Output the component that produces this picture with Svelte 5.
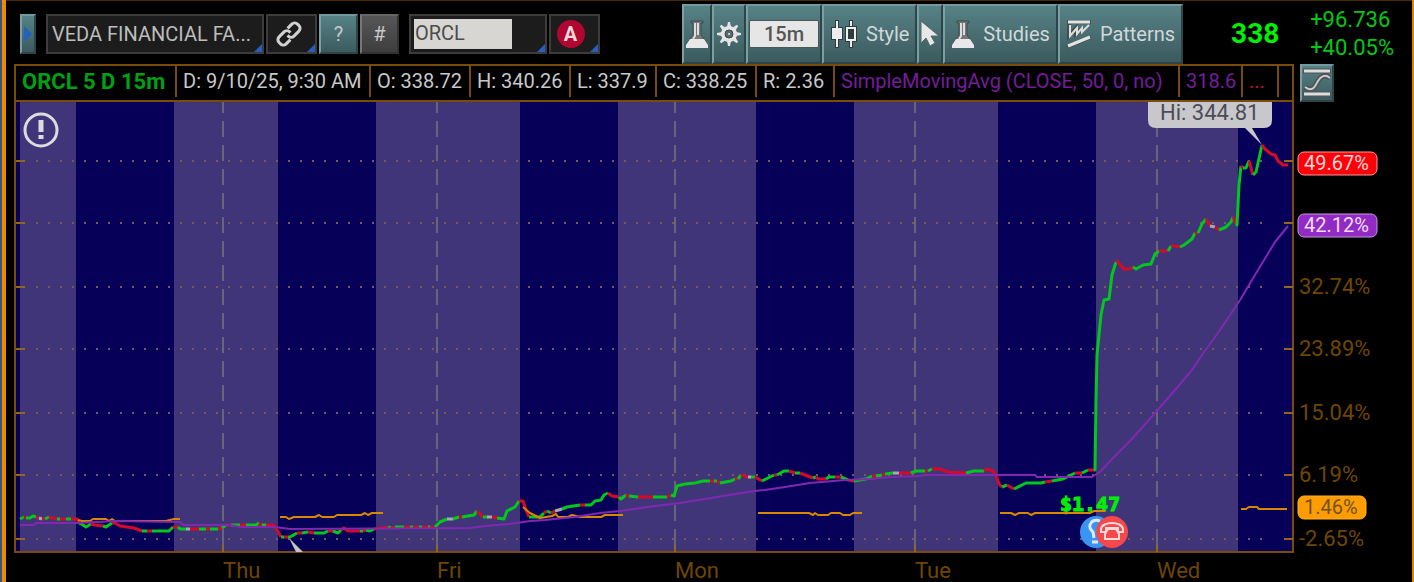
<script>
    let symbol = "ORCL";

    const cells = [
        { text: "ORCL 5 D 15m", kind: "name" },
        { text: "D: 9/10/25, 9:30 AM" },
        { text: "O: 338.72" },
        { text: "H: 340.26" },
        { text: "L: 337.9" },
        { text: "C: 338.25" },
        { text: "R: 2.36" },
        { text: "SimpleMovingAvg (CLOSE, 50, 0, no)", kind: "study" },
        { text: "318.6", kind: "study" },
        { text: "...", kind: "more" },
        { text: "" }
    ];

    // extended hours are shaded lighter
    const sessions = [[20, 76], [174, 278], [376, 520], [618, 756], [854, 998], [1096, 1238]];

    const days = [
        { x: 223, label: "Thu" },
        { x: 437, label: "Fri" },
        { x: 675, label: "Mon" },
        { x: 915, label: "Tue" },
        { x: 1157, label: "Wed" }
    ];

    const levels = [
        { y: 161 },
        { y: 223 },
        { y: 287, label: "32.74%" },
        { y: 349, label: "23.89%" },
        { y: 413, label: "15.04%" },
        { y: 475, label: "6.19%" },
        { y: 539, label: "-2.65%" }
    ];

    const badges = [
        { y: 152, width: 79, text: "49.67%", fill: "#ff0008", stroke: "#ff9a9a", color: "#ffd8d8" },
        { y: 214, width: 79, text: "42.12%", fill: "#922bc4", stroke: "#c795e0", color: "#eedcf8" },
        { y: 496, width: 68, text: "1.46%", fill: "#ff9c00", stroke: "#ffae30", color: "#6f5220" }
    ];

    // u = up, d = down, n = unchanged; each run goes on from the last point
    const price = `
        20,519 u 24,517 d 26,518 u 30,518 33,516 36,517 d 39,518 n 42,519 d 45,519 u 49,517 d 57,519 u 60,519
        d 66,519 u 71,519 d 77,519 79,523 u 83,525 86,527 91,524 d 95,525 103,526 u 106,527 112,523 d 115,523
        120,526 127,527 134,528 142,531 u 147,531 d 152,531 u 169,531 173,527 d 178,527 u 180,529 186,529
        n 190,529 d 199,529 u 206,529 d 210,529 u 218,529 d 222,528 u 226,525 d 231,525 u 240,525 d 246,525
        u 256,525 259,523 d 262,525 u 266,525 d 274,525 276,528 281,537 u 284,537 d 288,537 u 290,537 297,533
        d 302,533 u 308,532 d 314,533 u 324,533 328,531 d 333,531 u 338,533 341,530 d 344,528 348,531 360,531
        u 363,531 d 366,530 u 370,531 374,529 d 388,527 u 391,528 d 395,527 u 404,527 d 410,527 u 413,527
        d 419,527 u 422,527 d 428,527 u 430,527 d 435,527 u 440,522 447,519 n 453,519 u 459,517 d 462,517
        u 474,515 477,511 d 483,517 u 487,517 n 492,517 d 497,518 u 504,519 507,511 515,507 519,501
        d 523,501 526,510 529,517 u 534,517 540,517 544,513 d 547,511 u 551,513 d 555,511 n 562,509
        u 567,507 580,505 d 585,505 u 591,505 595,501 601,500 604,495 608,493 d 612,496 619,497
        u 621,499 626,495 d 629,496 u 638,497 d 653,497 u 658,497 667,497 d 671,495 u 674,496 677,486 685,484
        695,483 703,481 710,481 d 714,481 u 717,481 d 720,483 u 731,481 735,479 d 738,479 u 741,475 d 748,477
        n 751,477 u 755,477 d 762,481 u 768,478 774,475 d 777,475 u 784,471 789,471 d 795,473 u 800,473
        d 805,475 813,478 u 816,477 d 818,479 826,479 u 829,477 835,477 d 841,477 u 848,480 d 854,481
        u 866,479 872,476 d 876,476 u 882,475 d 885,474 u 893,473 n 899,473 d 911,473 u 916,471 925,471
        d 928,471 u 932,469 d 940,469 948,472 966,473 u 974,471 984,471 d 987,469 993,471 996,475 999,484
        1002,487 u 1007,485 d 1014,489 u 1026,483 1041,483 1045,482 d 1052,481 u 1063,479 1075,473 d 1082,473
        u 1088,470 d 1094,470 u 1095,470 1096,400 1097,355 1099,335 1101,315 1104,300 1109,299 1112,275
        1116,262 d 1117,261 1124,269 1129,269 1133,267 u 1136,269 1143,265 1151,264 1155,254 1159,251
        d 1168,251 u 1171,246 d 1174,246 1180,247 u 1184,245 1192,239 1195,233 d 1198,233 u 1202,224
        1206,219 d 1210,226 n 1215,227 d 1219,230 u 1226,227 1231,222 1233,217 d 1236,224 u 1237,225
        1239,185 1241,166 d 1243,168 u 1246,168 1249,161 d 1253,175 u 1256,172 1262,145 d 1265,149
        1271,154 1275,155 1278,161 1283,165 1288,165`;

    const average = "20,525 34,525 36,523 78,523 115,521 180,522 183,525 230,525 240,527 275,527 290,529 "
        + "470,528 485,526 510,524 530,521 545,520 575,517 600,513 620,511 655,506 680,503 705,499 735,494 "
        + "755,491 765,490 785,487 810,483 845,480 870,479 890,477 920,476 925,475 1035,475 1037,477 "
        + "1092,477 1100,472 1112,459 1130,441 1156,412 1175,390 1192,370 1204,352 1218,333 1226,321 "
        + "1240,300 1258,270 1275,242 1288,226";

    const compare = [
        "78,520 82,521 90,521 93,519 106,519 109,521 112,519 115,521 166,521 174,519 180,519",
        "280,517 286,517 289,519 294,517 315,517 319,515 322,517 334,517 337,515 361,515 365,513 368,515 372,513 383,513",
        "523,507 530,513 540,518 552,516 556,514 558,517 568,517 572,515 580,517 601,517 605,515 623,515",
        "758,513 809,513 813,515 815,513 818,515 828,515 831,513 840,513 843,515 850,515 853,513 862,513",
        "1000,513 1011,513 1015,515 1019,513 1028,513 1031,515 1035,513 1090,513 1094,511 1105,511",
        "1241,509 1246,509 1249,507 1257,507 1259,509 1287,509"
    ];

    function toRuns(source) {
        const runs = [];
        let last = "";
        for (const token of source.trim().split(/\s+/)) {
            if (token.length === 1) {
                runs.push({ kind: token, points: last });
            } else {
                if (runs.length) runs[runs.length - 1].points += " " + token;
                last = token;
            }
        }
        return runs;
    }

    const runs = toRuns(price);
</script>

{#snippet flask()}
    <svg class="icon" width="24" height="30" viewBox="0 0 24 30" aria-hidden="true">
        <path d="M6 2h12v2h-2v12l6 8v4H2v-4l6-8V4H6z" fill="#777" stroke="#3b4b4d" />
        <path d="M10 4v13l-2 3M13 4v12" stroke="#ddd" stroke-width="2" fill="none" />
        <path d="M5 20h14l4 6v3H1v-3z" fill="#e8e8e8" />
    </svg>
{/snippet}

<main>
    <header class="toolbar">
        <button class="teal expand" aria-label="Expand">
            <svg width="8" height="16" viewBox="0 0 8 16"><path d="M0 0l8 8-8 8z" fill="#2560c0" /></svg>
        </button>
        <div class="group">
            <div class="field account">
                <select aria-label="Watchlist">
                    <option>VEDA FINANCIAL FA...</option>
                </select>
            </div>
            <button class="field square" aria-label="Link">
                <svg width="28" height="28" viewBox="0 0 28 28" fill="none" stroke="#d2d2d2" stroke-width="3">
                    <g transform="rotate(-45 14 14)">
                        <path d="M11 19H5a4 4 0 0 1-4-4v-2a4 4 0 0 1 4-4h7a4 4 0 0 1 4 4v1" />
                        <path d="M17 9h6a4 4 0 0 1 4 4v2a4 4 0 0 1-4 4h-7a4 4 0 0 1-4-4v-1" />
                    </g>
                </svg>
            </button>
            <button class="teal small">?</button>
            <button class="small hash">#</button>
        </div>
        <div class="group">
            <div class="field symbol">
                <input bind:value={symbol} aria-label="Symbol" />
            </div>
            <button class="field square" aria-label="Alerts"><span class="dot">A</span></button>
        </div>
        <nav>
            <button class="teal narrow" aria-label="Study sets">{@render flask()}</button>
            <button class="teal narrow" aria-label="Settings">
                <svg class="icon" width="28" height="28" viewBox="-14 -14 28 28" aria-hidden="true">
                    {#each [0, 45, 90, 135, 180, 225, 270, 315] as angle}
                        <path d="M-2-7L-1-12H1L2-7z" fill="#e4e4e4" transform="rotate({angle})" />
                    {/each}
                    <circle r="6" fill="none" stroke="#e4e4e4" stroke-width="4" />
                    <circle r="4" fill="#516f72" stroke="#444" />
                    <circle r="1" fill="#e4e4e4" />
                </svg>
            </button>
            <button class="teal period"><span>15m</span></button>
            <button class="teal">
                <svg class="icon" width="28" height="30" viewBox="0 0 28 30" aria-hidden="true">
                    <path d="M7 1v28M21 1v28" stroke="#2f3c3e" stroke-width="4" />
                    <path d="M1 8h12v13H1zM15 7h12v16H15z" fill="#2f3c3e" />
                    <path d="M7 2v26M21 2v5M21 22v6" stroke="#eee" stroke-width="2" />
                    <path d="M2 9h10v11H2z" fill="#eee" />
                    <path d="M17 9h8v12h-8z" fill="#2f3c3e" stroke="#eee" stroke-width="2" />
                </svg>
                Style
            </button>
            <button class="teal narrow" aria-label="Pointer">
                <svg class="icon" width="20" height="28" viewBox="0 0 20 28" aria-hidden="true">
                    <path d="M1 1v22l5-5 4 8 5-3-4-7h8z" fill="#e8e8e8" stroke="#56696b" />
                </svg>
            </button>
            <button class="teal">{@render flask()} Studies</button>
            <button class="teal">
                <svg class="icon" width="26" height="30" viewBox="0 0 26 30" aria-hidden="true">
                    <path d="M1 3h24M3 4v13l7-8v6l7-6M1 28l24-10" stroke="#444f50" stroke-width="4" fill="none" />
                    <path d="M2 3h22M2 27l22-9" stroke="#e4e4e4" stroke-width="3" fill="none" />
                    <path d="M4 6v11l7-8v6l5-6v4l7-7" stroke="#ddd" stroke-width="2" fill="none" />
                </svg>
                Patterns
            </button>
        </nav>
        <div class="quote">
            <strong>338</strong>
            <div>
                <p>+96.736</p>
                <p>+40.05%</p>
            </div>
        </div>
    </header>

    <div class="status">
        <div class="cells">
            {#each cells as { text, kind }}
                <span class={kind}>{text}</span>
            {/each}
        </div>
        <button class="teal scale" aria-label="Scale">
            <svg width="28" height="30" viewBox="0 0 28 30" fill="none" aria-hidden="true">
                <path d="M0 3h28M0 26h28M2 19c8 6 10-1 13-6s7-7 12-3" stroke="#4b5355" stroke-width="5" />
                <path d="M1 3h26M1 26h26" stroke="#ddd" stroke-width="3" />
                <path d="M2 19c8 6 10-1 13-6s7-7 12-3" stroke="#ccc" stroke-width="2" />
            </svg>
        </button>
    </div>

    <svg class="chart" viewBox="6 102 1406 480" role="img" aria-label="ORCL 5 day chart">
        <rect x="14" y="102" width="1280" height="451" fill="#7a4c08" />
        <rect x="16" y="102" width="1276" height="449" fill="#060058" />
        {#each sessions as [from, to]}
            <rect x={from} y="102" width={to - from} height="449" fill="#403578" />
        {/each}

        {#each levels as { y, label }}
            <path d="M36 {y}H1264" class="dots" />
            <path d="M16 {y}h9M1284 {y}h9" class="tick" />
            {#if label}
                <text x="1299" y={y + 7} class="axis">{label}</text>
            {/if}
        {/each}
        {#each days as { x, label }}
            <path d="M{x} 102V545" class="day" />
            <path d="M{x} 545v7" class="tick" />
            <text {x} y="578" class="axis">{label}</text>
        {/each}

        <path d="M1148 102h124v18q0 8-8 8h-12l10 17-17-17h-89q-8 0-8-8z" fill="#c8c8cc" />
        <text x="1160" y="120" class="high">Hi: 344.81</text>
        <path d="M289 538l14 14h-7z" fill="#c4c4c4" />
        <text x="1060" y="511" class="earnings">$1.47</text>

        {#each runs as { kind, points }}
            <polyline {points} class="line {kind}" />
        {/each}
        {#each compare as points}
            <polyline {points} class="line compare" />
        {/each}
        <polyline points={average} class="line average" />

        <g fill="none" stroke="#dceaff" stroke-width="3">
            <circle cx="1096" cy="532" r="16" fill="#3a94f2" stroke="none" />
            <path d="M1100 521c-5-2-9 0-10 4-1 3 1 5 3 7l1 6M1092 542h6" />
        </g>
        <g fill="none" stroke="#ffd8d8" stroke-width="2">
            <circle cx="1112" cy="532" r="16" fill="#f4484c" stroke="none" />
            <path d="M1101 532v-3c1-8 21-8 22 0v3h-5v-4h-12v4zM1105 534v5h14v-5l-3-5h-8z" />
        </g>

        <g fill="none" stroke="#dcdce0" stroke-width="3">
            <circle cx="41" cy="130" r="16" />
            <path d="M41 120v12M41 135v4" stroke-width="5" />
        </g>

        {#each badges as { y, width, text, fill, stroke, color }}
            <rect x="1298" {y} {width} height="23" rx="6" {fill} {stroke} />
            <text x="1304" y={y + 18} class="badge" fill={color}>{text}</text>
        {/each}
    </svg>
</main>

<style>
    :global(body) {
        background: #000;
    }

    main {
        font-family: Roboto, "Liberation Sans", sans-serif;
        font-size: 20px;
        background: #000;
        color: #c8c8c8;
        margin-left: 2px;
        border-left: 4px solid #f08a00;
        border-right: 2px solid #e08000;
        box-shadow: -2px 0 #34587a;
    }

    button {
        display: flex;
        align-items: center;
        justify-content: center;
        box-sizing: border-box;
        font: inherit;
        color: inherit;
        padding: 0;
        cursor: pointer;
    }

    .toolbar {
        display: flex;
        align-items: center;
        height: 64px;
        box-sizing: border-box;
        border-top: 1px solid #4a2800;
        padding: 2px 0 0 14px;
    }

    .group {
        display: flex;
        gap: 2px;
        margin-left: 10px;
    }

    .teal {
        background: linear-gradient(#568286, #3c5a5e);
        border: 2px solid;
        border-color: #6f9a9e #2c4548 #2c4548 #7aa0a4;
    }

    .expand {
        width: 16px;
        height: 40px;
        justify-content: flex-start;
        padding-left: 2px;
    }

    .field {
        position: relative;
        box-sizing: border-box;
        height: 40px;
        background: #1c1c1c;
        border: 2px solid #3c3c3c;
    }

    .field::after {
        content: "";
        position: absolute;
        right: 0;
        bottom: 0;
        border: 4px solid;
        border-color: transparent #2a5cc0 #2a5cc0 transparent;
    }

    .account {
        width: 218px;
    }

    select {
        appearance: none;
        width: 100%;
        height: 100%;
        padding: 0 4px;
        border: none;
        background: none;
        color: #bcbcbc;
        font: inherit;
    }

    .square {
        width: 51px;
    }

    .square svg {
        margin-right: 6px;
    }

    .small {
        width: 39px;
        height: 40px;
    }

    .hash {
        background: linear-gradient(#565656, #3e3e3e);
        border: 2px solid;
        border-color: #666 #333 #333 #777;
    }

    .symbol {
        width: 138px;
        padding: 3px;
    }

    input {
        box-sizing: border-box;
        width: 98px;
        height: 30px;
        border: none;
        padding: 0 0 2px 1px;
        background: #d8d6d2;
        color: #4c4c4c;
        font: inherit;
    }

    .dot {
        width: 28px;
        height: 28px;
        margin-right: 8px;
        border-radius: 50%;
        background: #b00630;
        color: #f0d8dc;
        font-weight: 700;
        line-height: 28px;
    }

    nav {
        display: flex;
        height: 60px;
        margin-left: 82px;
    }

    nav .teal {
        gap: 8px;
        padding: 0 6px;
        color: #d0d8d8;
    }

    nav .narrow {
        padding: 0 1px;
    }

    .icon {
        flex: none;
    }

    nav .period {
        padding: 0 1px;
    }

    .period span {
        width: 68px;
        line-height: 26px;
        border: 1px solid #4c5658;
        border-radius: 2px;
        background: #e6e6e6;
        color: #555;
        font-weight: 500;
    }

    .quote {
        display: flex;
        flex: 1;
        align-items: center;
        justify-content: space-between;
        padding: 0 18px 0 48px;
        color: #00c814;
    }

    .quote strong {
        color: #00f000;
        font-size: 28px;
    }

    p {
        margin: 0;
        font-size: 22px;
        line-height: 28px;
    }

    .status {
        display: flex;
        gap: 6px;
        padding: 0 78px 0 8px;
    }

    .cells {
        flex: 1;
        display: grid;
        grid-template-columns: 161fr 194fr 100fr 100fr 86fr 100fr 78fr 345fr 63fr 36fr 13fr;
        box-sizing: border-box;
        height: 38px;
        border: 2px solid #7a4c08;
        padding-bottom: 3px;
    }

    .cells span {
        padding-left: 6px;
        line-height: 31px;
        white-space: nowrap;
        min-width: 0;
        border-right: 2px solid #7a4c08;
    }

    .cells span:last-child {
        border: none;
    }

    .cells .name {
        color: #00a014;
        font-size: 22px;
        font-weight: 700;
    }

    .cells .study {
        color: #751c9c;
    }

    .cells .more {
        color: #c01030;
    }

    .scale {
        width: 34px;
        height: 38px;
    }

    .chart {
        display: block;
        width: 100%;
        overflow: visible;
    }

    .axis {
        font-size: 22px;
        fill: #6e4600;
    }

    .high {
        font-size: 22px;
        fill: #4c4c58;
    }

    .badge {
        font-size: 20px;
    }

    .earnings {
        font: 700 20px "DejaVu Sans Mono", monospace;
        fill: #00f000;
        stroke: #00f000;
    }

    .dots {
        stroke: #7a5a58;
        stroke-width: 2;
        stroke-dasharray: 2 10;
    }

    .tick {
        stroke: #94661c;
        stroke-width: 2;
    }

    .day {
        stroke: #66667a;
        stroke-width: 2;
        stroke-dasharray: 16 8;
        stroke-dashoffset: 5;
    }

    .line {
        fill: none;
        stroke-width: 2;
        stroke-linejoin: round;
    }

    .u {
        stroke: #00c81c;
        stroke-width: 3;
    }

    .d {
        stroke: #d40a28;
        stroke-width: 3;
    }

    .n {
        stroke: #a8a8b4;
        stroke-width: 3;
    }

    .compare {
        stroke: #d88800;
    }

    .average {
        stroke: #8028b0;
    }
</style>
